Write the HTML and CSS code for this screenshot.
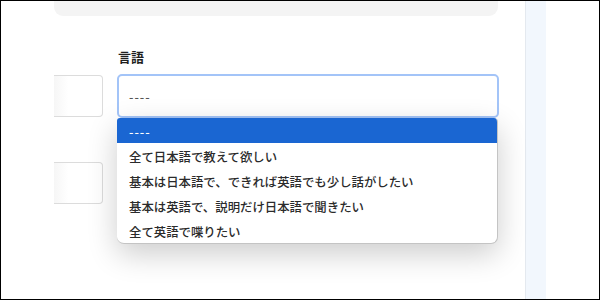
FILE: index.html
```html
<!DOCTYPE html>
<html lang="ja">
<head>
<meta charset="utf-8"/>
<meta content="width=device-width, initial-scale=1.0" name="viewport"/>
<title>言語</title>
<link rel="stylesheet" href="styles.css">
</head>
<body>
<div class="frame">
  <div class="main">
    <div class="top-box"></div>
    <div class="form-grid">
      <div class="col-left">
        <div class="input-box"></div>
        <div class="input-box second"></div>
      </div>
      <div class="col-right">
        <div class="field-label">言語</div>
        <div class="select-wrap">
          <div class="select-box">----</div>
          <!-- 開いたドロップダウン -->
          <ul class="dropdown">
            <li class="selected">----</li>
            <li>全て日本語で教えて欲しい</li>
            <li>基本は日本語で、できれば英語でも少し話がしたい</li>
            <li>基本は英語で、説明だけ日本語で聞きたい</li>
            <li>全て英語で喋りたい</li>
          </ul>
        </div>
      </div>
    </div>
  </div>
  <div class="side-strip"></div>
</div>
</body>
</html>
```

FILE: styles.css
```css
body {
  margin: 0;
  background: #fff;
  font-family: "Noto Sans CJK JP", "Noto Sans", sans-serif;
  color: #222;
}

.frame {
  width: 600px;
  height: 300px;
  box-sizing: border-box;
  border: 1px solid #000;
  display: flex;
  overflow: hidden;
}

.main {
  width: 524px;
  padding-left: 53px;
  box-sizing: border-box;
}

.top-box {
  width: 444px;
  height: 15px;
  background: #f4f4f4;
  border-radius: 0 0 9px 9px;
}

.form-grid {
  display: flex;
  gap: 14px;
  margin-top: 33px;
}

.col-left {
  width: 49px;
  padding-top: 26px;
  display: flex;
  flex-direction: column;
  gap: 45px;
}

.input-box {
  height: 42px;
  border: 1px solid #dcdcdc;
  border-left: none;
  border-radius: 0 4px 4px 0;
  box-sizing: border-box;
  background: linear-gradient(to right, rgba(240, 240, 240, 0.6), #fff 30%);
}

.col-right {
  width: 382px;
}

.field-label {
  font-size: 13px;
  font-weight: bold;
  line-height: 16px;
  height: 16px;
  margin-left: 1px;
  margin-bottom: 9px;
  color: #1f1f1f;
}

.select-wrap {
  position: relative;
}

.select-box {
  height: 44px;
  box-sizing: border-box;
  border: 2px solid #a3c4f8;
  border-radius: 5px;
  padding-left: 10px;
  padding-top: 1px;
  font-size: 12.4px;
  font-weight: 500;
  letter-spacing: 1px;
  line-height: 40px;
  color: #555;
}

.dropdown {
  position: absolute;
  top: 44px;
  left: 0;
  width: 381px;
  margin: 0;
  padding: 0;
  list-style: none;
  background: #fff;
  border-right: 1px solid #c4c4c4;
  border-bottom: 1px solid #c4c4c4;
  border-radius: 3px 4px 7px 7px;
  box-sizing: border-box;
  box-shadow: 0 10px 30px rgba(0, 0, 0, 0.2);
  overflow: hidden;
  z-index: 10;
}

.dropdown li {
  height: 25px;
  box-sizing: border-box;
  padding-top: 3px;
  line-height: 22px;
  padding-left: 12px;
  font-size: 12.4px;
  font-weight: 500;
  color: #2b2b2b;
  white-space: nowrap;
}

.dropdown li.selected {
  background: #1a66d2;
  color: #fff;
  letter-spacing: 1px;
}

.side-strip {
  width: 20px;
  background: #f2f7fd;
  border-left: 1px solid #e4e9ef;
}
```
